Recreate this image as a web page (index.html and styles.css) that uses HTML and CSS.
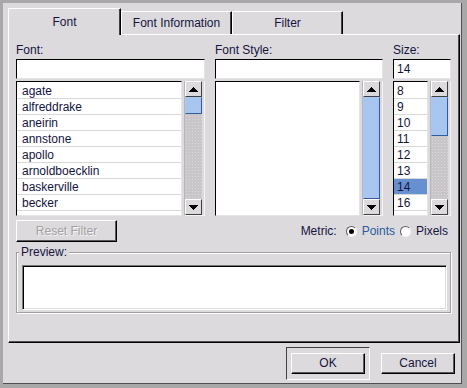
FILE: index.html
```html
<!DOCTYPE html>
<html>
<head>
<meta charset="utf-8">
<title>Font</title>
<link rel="stylesheet" href="styles.css">
</head>
<body>
<div class="window">
  <div class="dialog">
    <div class="tabs">
      <div class="tab active">Font</div>
      <div class="tab tab-info">Font Information</div>
      <div class="tab tab-filter">Filter</div>
    </div>
    <div class="pane">
      <div class="columns">
        <div class="col">
          <div class="label">Font:</div>
          <div class="input"></div>
          <div class="listrow">
            <div class="list list-font">
              <div class="item">agate</div>
              <div class="item">alfreddrake</div>
              <div class="item">aneirin</div>
              <div class="item">annstone</div>
              <div class="item">apollo</div>
              <div class="item">arnoldboecklin</div>
              <div class="item">baskerville</div>
              <div class="item">becker</div>
            </div>
            <div class="scrollwrap">
              <div class="scrollbar">
                <div class="sbtn"><svg width="9" height="5" viewBox="0 0 9 5"><polygon points="0,5 4.5,0 9,5" fill="#000"/></svg></div>
                <div class="trough"><div class="thumb thumb-font"></div></div>
                <div class="sbtn"><svg width="9" height="5" viewBox="0 0 9 5"><polygon points="0,0 9,0 4.5,5" fill="#000"/></svg></div>
              </div>
            </div>
          </div>
        </div>
        <div class="col">
          <div class="label">Font Style:</div>
          <div class="input"></div>
          <div class="listrow">
            <div class="list"></div>
            <div class="scrollwrap">
              <div class="scrollbar">
                <div class="sbtn"><svg width="9" height="5" viewBox="0 0 9 5"><polygon points="0,5 4.5,0 9,5" fill="#000"/></svg></div>
                <div class="trough"><div class="thumb thumb-style"></div></div>
                <div class="sbtn"><svg width="9" height="5" viewBox="0 0 9 5"><polygon points="0,0 9,0 4.5,5" fill="#000"/></svg></div>
              </div>
            </div>
          </div>
        </div>
        <div class="col">
          <div class="label">Size:</div>
          <div class="input input-size">14</div>
          <div class="listrow">
            <div class="list list-size">
              <div class="item">8</div>
              <div class="item">9</div>
              <div class="item">10</div>
              <div class="item">11</div>
              <div class="item">12</div>
              <div class="item">13</div>
              <div class="item sel">14</div>
              <div class="item">16</div>
            </div>
            <div class="scrollwrap">
              <div class="scrollbar">
                <div class="sbtn"><svg width="9" height="5" viewBox="0 0 9 5"><polygon points="0,5 4.5,0 9,5" fill="#000"/></svg></div>
                <div class="trough"><div class="thumb thumb-size"></div></div>
                <div class="sbtn"><svg width="9" height="5" viewBox="0 0 9 5"><polygon points="0,0 9,0 4.5,5" fill="#000"/></svg></div>
              </div>
            </div>
          </div>
        </div>
      </div>
      <div class="controls">
        <div class="btn btn-reset disabled">Reset Filter</div>
        <div class="metric">
          <span class="metric-label">Metric:</span>
          <span class="radio checked"><span class="dot"></span></span>
          <span class="radio-text active-text">Points</span>
          <span class="radio"></span>
          <span class="radio-text">Pixels</span>
        </div>
      </div>
      <fieldset class="preview">
        <legend>Preview:</legend>
        <div class="preview-box"></div>
      </fieldset>
    </div>
    <div class="buttons">
      <div class="default-frame"><div class="btn">OK</div></div>
      <div class="btn">Cancel</div>
    </div>
  </div>
</div>
</body>
</html>
```

FILE: styles.css
```css
* { box-sizing: border-box; }
html, body { margin: 0; padding: 0; }
body {
  width: 467px;
  height: 388px;
  overflow: hidden;
  font-family: "Liberation Sans", Arial, sans-serif;
  font-size: 12px;
  color: #141440;
  background: #a8a8a8;
}
.window {
  width: 467px;
  height: 388px;
  padding: 3px 5px 4px 3px;
  background: #a8a8a8;
}
.dialog {
  height: 100%;
  background: #dddadd;
  border-right: 1px solid #505050;
  border-bottom: 1px solid #505050;
  padding: 5px 1px 3px 5px;
  display: flex;
  flex-direction: column;
}
.tabs {
  display: flex;
  align-items: flex-end;
  height: 27px;
  margin-bottom: -1px;
  position: relative;
  z-index: 1;
}
.tab {
  width: 111px;
  height: 23px;
  margin-bottom: 1px;
  padding-top: 4px;
  line-height: 15px;
  text-align: center;
  border-top: 1px solid #fff;
  border-left: 1px solid #fff;
  border-right: 1px solid #000;
  box-shadow: inset -1px 0 0 #404040;
  background: #dddadd;
}
.tab.active {
  width: 113px;
  height: 27px;
  margin-bottom: 0;
  padding-top: 6px;
}
.pane {
  height: 309px;
  border-top: 1px solid #fff;
  border-left: 1px solid #fff;
  border-right: 1px solid #000;
  border-bottom: 1px solid #000;
  box-shadow: inset -1px -1px 0 #505050;
  padding: 7px 8px 0 7px;
}
.columns {
  display: grid;
  grid-template-columns: 189px 168px 58px;
  column-gap: 10px;
}
.label {
  height: 15px;
  line-height: 15px;
  padding-top: 1px;
}
.input {
  height: 20px;
  margin-top: 2px;
  background: #fff;
  border: 1px solid;
  border-color: #000 #e4e4e4 #e4e4e4 #000;
  line-height: 18px;
  padding-left: 3px;
}
.listrow {
  display: flex;
  height: 135px;
  margin-top: 2px;
}
.list {
  flex: 1;
  min-width: 0;
  background: #fff;
  border: 1px solid;
  border-color: #000 #e4e4e4 #e4e4e4 #000;
  padding-top: 1px;
  overflow: hidden;
}
.item {
  height: 16px;
  line-height: 15px;
  padding-top: 1px;
  border-bottom: 1px solid #d8d8d8;
  padding-left: 5px;
  white-space: nowrap;
  overflow: hidden;
}
.list-size .item { padding-left: 3px; }
.item.sel { background: #6690d0; }
.scrollwrap {
  width: 21px;
  margin-left: 2px;
  border-left: 1px solid #b8b6b8;
  border-right: 1px solid #f4f4f4;
  border-bottom: 1px solid #f4f4f4;
  padding-right: 2px;
}
.scrollbar {
  width: 17px;
  height: 134px;
  display: flex;
  flex-direction: column;
}
.sbtn {
  height: 16px;
  flex: none;
  background: #dddadd;
  border: 1px solid;
  border-color: #fff #404040 #404040 #fff;
  display: flex;
  align-items: center;
  justify-content: center;
}
.sbtn svg { display: block; shape-rendering: crispEdges; }
.trough {
  flex: 1;
  background-color: #c8c6c8;
  background-image: radial-gradient(circle, #dad8da 0.6px, transparent 0.9px);
  background-size: 3px 3px;
}
.thumb {
  background-color: #6e9ad8;
  background-image: radial-gradient(circle, #a8c6f0 0.7px, transparent 1px);
  background-size: 2px 2px;
  border: 1px solid;
  border-color: #a8c8f4 #2f5c9c #2f5c9c #a8c8f4;
}
.thumb-font { height: 17px; }
.thumb-style { height: 102px; }
.thumb-size { height: 39px; }
.controls {
  display: flex;
  justify-content: space-between;
  align-items: center;
  height: 22px;
  margin-top: 4px;
}
.btn {
  width: 74px;
  height: 21px;
  line-height: 19px;
  text-align: center;
  border: 1px solid;
  border-color: #fff #000 #000 #fff;
  box-shadow: inset -1px -1px 0 #5a5a5a;
  background: #dddadd;
}
.btn-reset {
  width: 101px;
  height: 22px;
  line-height: 20px;
}
.btn.disabled {
  color: #a2a2a2;
  text-shadow: 1px 1px 0 #f4f4f4;
}
.metric {
  display: flex;
  align-items: center;
  margin-right: 3px;
}
.metric-label { margin-right: 9px; }
.radio {
  width: 11px;
  height: 11px;
  border-radius: 50%;
  background: #fff;
  border: 1px solid;
  border-color: #5c5c5c #f4f4f4 #f4f4f4 #5c5c5c;
  display: flex;
  align-items: center;
  justify-content: center;
  margin-right: 5px;
}
.radio .dot {
  width: 5px;
  height: 5px;
  border-radius: 50%;
  background: #000;
}
.radio-text { margin-right: 5px; }
.radio-text:last-child { margin-right: 0; }
.active-text { color: #2a5a9c; }
.preview {
  margin: 3px 0 0 0;
  width: 435px;
  padding: 5px 3px 2px 5px;
  border: 1px solid #a0a0a0;
  box-shadow: inset 1px 1px 0 #fff, 1px 1px 0 #fff;
  min-width: 0;
}
.preview legend {
  padding: 0 2px;
  margin-left: -3px;
  line-height: 15px;
  background: #dddadd;
}
.preview-box {
  height: 45px;
  background: #fff;
  border: 1px solid;
  border-color: #7c7c7c #fff #fff #7c7c7c;
  box-shadow: inset 1px 1px 0 #000, inset -1px -1px 0 #dcdcdc;
}
.buttons {
  display: flex;
  justify-content: flex-end;
  align-items: center;
  gap: 11px;
  height: 33px;
  margin-top: 4px;
  padding-right: 5px;
}
.default-frame {
  border: 1px solid;
  border-color: #404040 #fff #fff #404040;
  padding: 5px 4px;
}
```
